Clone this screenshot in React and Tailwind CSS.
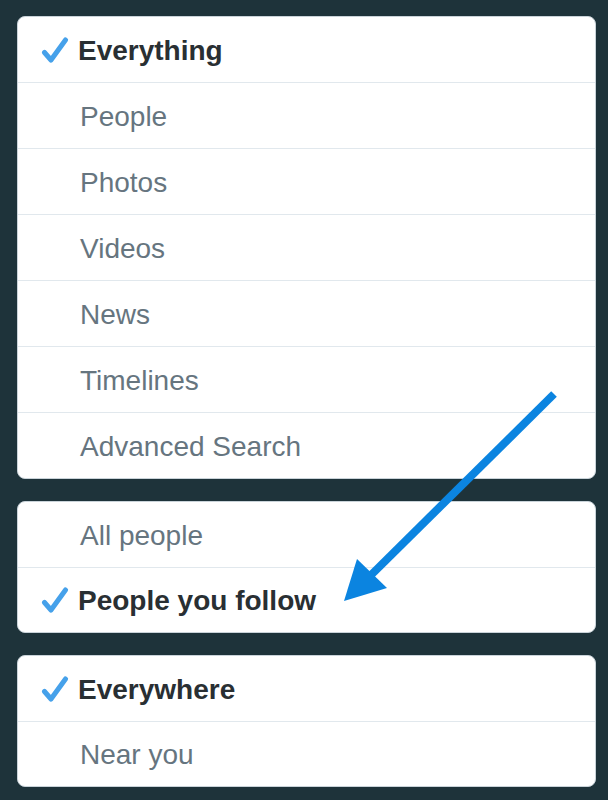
import React from "react";

function Check() {
  return (
    <svg className="absolute left-[23px] top-1/2 -translate-y-1/2" width="28" height="28" viewBox="0 0 28 28">
      <path d="M3.5 16.5 L10 24 L24.5 4" fill="none" stroke="#46a1ea" strokeWidth="5" strokeLinecap="round" strokeLinejoin="round" />
    </svg>
  );
}

function Row({ label, checked, last, h }) {
  return (
    <div
      className={
        "relative flex items-center " +
        (last ? "" : "border-b border-[#e1e8ed] ") +
        (checked ? "pl-[60px] font-bold text-[#292f33]" : "pl-[62px] text-[#66757f]")
      }
      style={{ height: h }}
    >
      {checked && <Check />}
      <span className="text-[28px] leading-none translate-y-[1px]">{label}</span>
    </div>
  );
}

function Card({ items, lastH }) {
  return (
    <div className="bg-white rounded-[8px] border border-[#c9d3d9] overflow-hidden">
      {items.map((it, i) => (
        <Row
          key={it.label}
          label={it.label}
          checked={it.checked}
          last={i === items.length - 1}
          h={i === items.length - 1 ? lastH : 66}
        />
      ))}
    </div>
  );
}

export default function App() {
  return (
    <div
      className="relative w-[608px] h-[800px] bg-[#1e333a] pt-[16px] pl-[17px] pr-[12px] flex flex-col gap-[22px]"
      style={{ fontFamily: '"Liberation Sans", Arial, sans-serif' }}
    >
      <Card
        lastH={65}
        items={[
          { label: "Everything", checked: true },
          { label: "People" },
          { label: "Photos" },
          { label: "Videos" },
          { label: "News" },
          { label: "Timelines" },
          { label: "Advanced Search" },
        ]}
      />
      <Card
        lastH={64}
        items={[{ label: "All people" }, { label: "People you follow", checked: true }]}
      />
      <Card
        lastH={64}
        items={[{ label: "Everywhere", checked: true }, { label: "Near you" }]}
      />
      <svg className="absolute inset-0 pointer-events-none" width="608" height="800" viewBox="0 0 608 800">
        <line x1="554" y1="394" x2="366" y2="580" stroke="#0b84e0" strokeWidth="8" />
        <polygon points="344,601 357,559 387,588" fill="#0b84e0" />
      </svg>
    </div>
  );
}
